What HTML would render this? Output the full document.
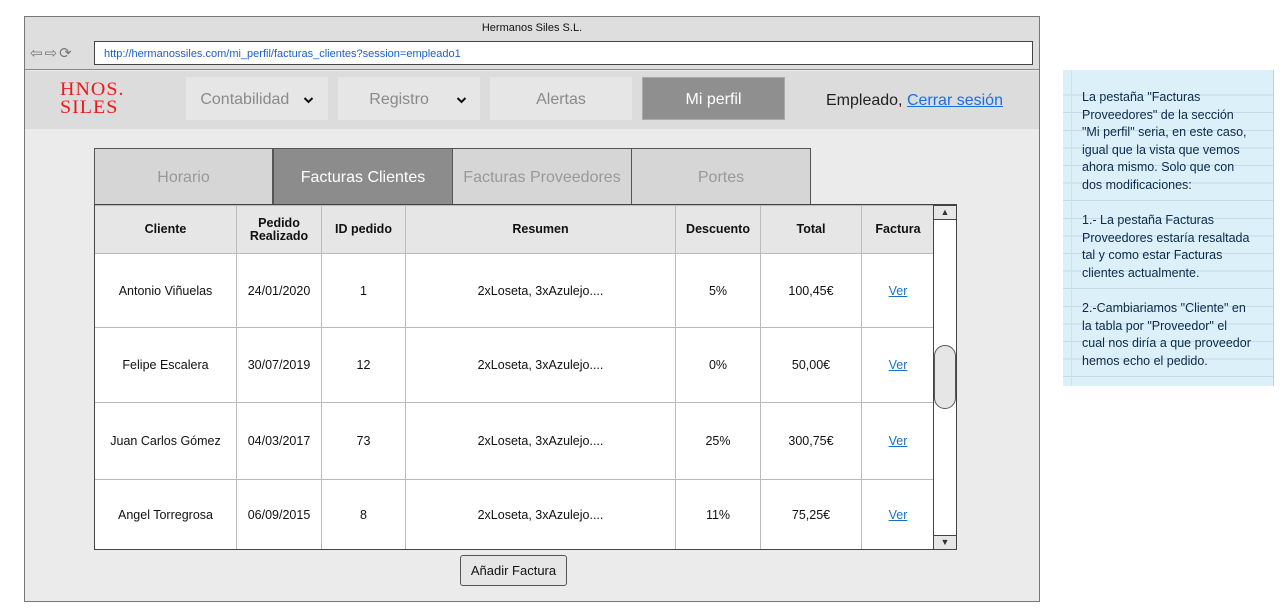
<!DOCTYPE html>
<html><head><meta charset="utf-8"><style>
*{margin:0;padding:0;box-sizing:border-box}
body{width:1286px;height:612px;background:#fff;position:relative;font-family:"Liberation Sans",sans-serif;overflow:hidden}
.a{position:absolute}
.win{left:24px;top:16px;width:1016px;height:586px;border:1px solid #777;background:#ebebeb}
.nb{background:#e6e6e6;color:#8a8a8a;font-size:16px;display:flex;align-items:center;justify-content:center;height:43px;top:77px;width:142px;padding-top:3px}
.tab{top:148px;height:57px;border:1px solid #555;background:#d6d6d6;color:#999;font-size:16px;display:flex;align-items:center;justify-content:center;padding-top:2px}
table{border-collapse:collapse;font-size:12.5px;table-layout:fixed}
td,th{border:1px solid #bbb;text-align:center;color:#111}
th{background:#e6e6e6;font-weight:bold;height:48px;line-height:13px}
td{background:#fff}
a{color:#1a6fc9;text-decoration:underline}
</style></head><body>
<div class="a win"></div>
<div class="a" style="left:25px;top:17px;width:1014px;height:53px;background:#dedede;border-bottom:1px solid #888"></div>
<div class="a" style="left:0;width:1064px;top:22px;text-align:center;font-size:11px;color:#111">Hermanos Siles S.L.</div>
<div class="a" style="left:30px;top:44px;font-size:15px;color:#777;letter-spacing:2px">⇦⇨⟳</div>
<div class="a" style="left:94px;top:41px;width:939px;height:24px;border:1px solid #444;background:#fff;font-size:11px;color:#1a5fd0;padding:6px 0 0 9px">http://hermanossiles.com/mi_perfil/facturas_clientes?session=empleado1</div>
<div class="a" style="left:25px;top:71px;width:1014px;height:58px;background:#dcdcdc"></div>
<div class="a" style="left:60px;top:80px;font-family:'Liberation Serif',serif;color:#f01818;font-size:20px;line-height:19px;letter-spacing:1px;transform:scaleY(0.95)">HNOS.<br>SILES</div>
<div class="a nb" style="left:186px">Contabilidad&nbsp;&nbsp;&nbsp;<svg width="11" height="8" viewBox="0 0 11 8"><path d="M1.5 2 L5.5 6 L9.5 2" stroke="#111" stroke-width="2" fill="none"/></svg></div>
<div class="a nb" style="left:338px">&nbsp;&nbsp;&nbsp;&nbsp;Registro&nbsp;&nbsp;&nbsp;&nbsp;&nbsp;&nbsp;<svg width="11" height="8" viewBox="0 0 11 8"><path d="M1.5 2 L5.5 6 L9.5 2" stroke="#111" stroke-width="2" fill="none"/></svg></div>
<div class="a nb" style="left:490px">Alertas</div>
<div class="a nb" style="left:642px;width:143px;background:#8f8f8f;color:#fff;border:1px solid #aaa">Mi perfil</div>
<div class="a" style="left:826px;top:92px;font-size:16px;color:#222">Empleado, <a style="color:#1a6fe0">Cerrar sesión</a></div>
<div class="a tab" style="left:94px;width:179px">Horario</div>
<div class="a tab" style="left:273px;width:180px;background:#8c8c8c;color:#fff">Facturas Clientes</div>
<div class="a tab" style="left:452px;width:180px">Facturas Proveedores</div>
<div class="a tab" style="left:631px;width:180px">Portes</div>
<div class="a" style="left:94px;top:204px;width:863px;height:346px;border:1px solid #444;background:#fff;overflow:hidden">
<table style="width:840px;margin-left:-1px">
<colgroup><col style="width:142px"><col style="width:85px"><col style="width:84px"><col style="width:270px"><col style="width:85px"><col style="width:101px"><col style="width:73px"></colgroup>
<tr><th>Cliente</th><th>Pedido<br>Realizado</th><th>ID pedido</th><th>Resumen</th><th>Descuento</th><th>Total</th><th>Factura</th></tr>
<tr style="height:74px"><td>Antonio Viñuelas</td><td>24/01/2020</td><td>1</td><td>2xLoseta, 3xAzulejo....</td><td>5%</td><td>100,45€</td><td><a>Ver</a></td></tr>
<tr style="height:75px"><td>Felipe Escalera</td><td>30/07/2019</td><td>12</td><td>2xLoseta, 3xAzulejo....</td><td>0%</td><td>50,00€</td><td><a>Ver</a></td></tr>
<tr style="height:77px"><td>Juan Carlos Gómez</td><td>04/03/2017</td><td>73</td><td>2xLoseta, 3xAzulejo....</td><td>25%</td><td>300,75€</td><td><a>Ver</a></td></tr>
<tr style="height:70px"><td>Angel Torregrosa</td><td>06/09/2015</td><td>8</td><td>2xLoseta, 3xAzulejo....</td><td>11%</td><td>75,25€</td><td><a>Ver</a></td></tr>
</table></div>
<div class="a" style="left:933px;top:205px;width:24px;height:345px;border:1px solid #444;background:#fff"></div>
<div class="a" style="left:933px;top:205px;width:24px;height:15px;border:1px solid #444;background:#e6e6e6;font-size:9px;text-align:center;line-height:13px;color:#333">▲</div>
<div class="a" style="left:933px;top:535px;width:24px;height:15px;border:1px solid #444;background:#e6e6e6;font-size:9px;text-align:center;line-height:13px;color:#333">▼</div>
<div class="a" style="left:934px;top:345px;width:22px;height:64px;border:1px solid #555;border-radius:11px;background:#e6e6e6"></div>
<div class="a" style="left:460px;top:555px;width:107px;height:31px;border:1px solid #555;border-radius:3px;background:#e6e6e6;font-size:13px;text-align:center;line-height:29px;color:#111">Añadir Factura</div>
<div class="a" style="left:1063px;top:70px;width:211px;height:316px;background:#dcf0fa;border-right:1px solid #ccc;background-image:repeating-linear-gradient(to bottom,transparent 0,transparent 16.6px,#c6dae6 16.6px,#c6dae6 17.6px);background-position:0 8px"></div>
<div class="a" style="left:1071px;top:70px;width:1px;height:316px;background:#e8dcc0"></div>
<div class="a" style="left:1082px;top:89px;white-space:nowrap;font-size:12.5px;line-height:17.6px;color:#0a2a4a">La pestaña "Facturas<br>Proveedores" de la sección<br>"Mi perfil" seria, en este caso,<br>igual que la vista que vemos<br>ahora mismo. Solo que con<br>dos modificaciones:<br><br>1.- La pestaña Facturas<br>Proveedores estaría resaltada<br>tal y como estar Facturas<br>clientes actualmente.<br><br>2.-Cambiariamos "Cliente" en<br>la tabla por "Proveedor" el<br>cual nos diría a que proveedor<br>hemos echo el pedido.</div>
</body></html>
